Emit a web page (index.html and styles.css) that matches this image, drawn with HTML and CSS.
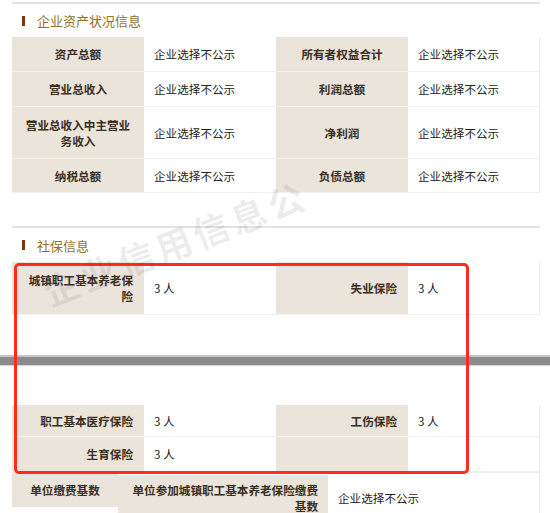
FILE: index.html
```html
<!DOCTYPE html>
<html lang="zh-CN">
<head>
<meta charset="utf-8">
<title>企业资产状况信息</title>
<link rel="stylesheet" href="styles.css">
</head>
<body>
<div class="page">
  <div class="rule rule-top"></div>
  <h2 class="title title-1"><span class="mark"></span>企业资产状况信息</h2>
  <div class="grid g1">
    <div class="lab">资产总额</div><div class="val">企业选择不公示</div><div class="lab">所有者权益合计</div><div class="val">企业选择不公示</div>
    <div class="lab">营业总收入</div><div class="val">企业选择不公示</div><div class="lab">利润总额</div><div class="val">企业选择不公示</div>
    <div class="lab">营业总收入中主营业务收入</div><div class="val">企业选择不公示</div><div class="lab">净利润</div><div class="val">企业选择不公示</div>
    <div class="lab">纳税总额</div><div class="val">企业选择不公示</div><div class="lab">负债总额</div><div class="val">企业选择不公示</div>
  </div>

  <div class="rule rule-2"></div>
  <h2 class="title title-2"><span class="mark"></span>社保信息</h2>
  <div class="grid g2 part-a">
    <div class="lab">城镇职工基本养老保险</div><div class="val">3 人</div><div class="lab">失业保险</div><div class="val">3 人</div>
  </div>
  <div class="cut"><div class="band"></div></div>
  <div class="grid g2 part-b">
    <div class="lab">职工基本医疗保险</div><div class="val">3 人</div><div class="lab">工伤保险</div><div class="val">3 人</div>
    <div class="lab">生育保险</div><div class="val">3 人</div><div class="lab"></div><div class="val"></div>
  </div>
  <div class="last">
    <div class="lab cell-a">单位缴费基数</div>
    <div class="lab cell-b">单位参加城镇职工基本养老保险缴费基数</div>
    <div class="val cell-c">企业选择不公示</div>
  </div>

  <div class="highlight"></div>
  <div class="wm wm-main">企业信用信息公</div>
</div>
</body>
</html>
```

FILE: styles.css
```css
* { box-sizing: border-box; }
html, body { margin: 0; padding: 0; background: #fff; }
body {
  font-family: "Noto Sans CJK SC", "Noto Sans", sans-serif;
  font-size: 11.6px;
  color: #222;
}
.page {
  position: relative;
  width: 550px;
  height: 513px;
  overflow: hidden;
}
.rule {
  margin-left: 12px;
  width: 528px;
  height: 2px;
  background: #e3e3e3;
}
.rule-top { margin-top: 2px; }
.rule-2 { margin-top: 33px; }

.title {
  margin: 0;
  display: flex;
  align-items: center;
  padding-left: 22px;
  font-size: 13px;
  font-weight: normal;
  color: #93712d;
}
.title-1 { height: 33px; }
.title-2 { height: 34px; }
.mark {
  display: inline-block;
  width: 3px;
  height: 10px;
  background: #7a3b12;
  margin-right: 12px;
}

.grid {
  display: grid;
  grid-template-columns: repeat(4, 132px);
  margin-left: 12px;
  width: 528px;
}
.g1 { grid-template-rows: 35px 35px 52px 34px; }
.part-a { grid-template-rows: 53px; }
.part-b { grid-template-rows: 32px 35px; }

.lab {
  background: #eae4da;
  color: #3a2e1f;
  font-weight: bold;
  display: flex;
  align-items: center;
  line-height: 16px;
  border-bottom: 1px solid #f4f1ec;
}
.val {
  background: #fff;
  color: #222;
  display: flex;
  align-items: center;
  padding-left: 10px;
  border-bottom: 1px solid #f0f0f0;
}
.grid .val:nth-child(4n) { border-right: 1px solid #ececec; }

.g1 .lab {
  justify-content: center;
  text-align: center;
  padding: 0 9px;
}
.g2 .lab {
  justify-content: flex-end;
  text-align: right;
  padding: 0 11px 0 10px;
}

.cut {
  height: 90px;
  padding-top: 40px;
}
.band {
  height: 11px;
  background: #8b8b8b;
  border-top: 2px solid #c6c6c6;
  border-bottom: 1px solid #d8d8d8;
}

.last {
  display: flex;
  align-items: flex-start;
  margin-left: 12px;
  width: 528px;
}
.cell-a {
  width: 106px;
  height: 35px;
  justify-content: center;
  border-bottom: none;
}
.cell-b {
  width: 210px;
  height: 46px;
  margin-top: 3px;
  justify-content: flex-end;
  text-align: right;
  padding: 0 10px 0 12px;
  border-bottom: none;
}
.cell-c {
  flex: 1;
  height: 50px;
  border-top: 1px solid #ececec;
  border-right: 1px solid #ececec;
  border-bottom: none;
}

.highlight {
  position: absolute;
  left: 14px;
  top: 263px;
  width: 455px;
  height: 211px;
  border: 3px solid #ff2b1c;
  border-radius: 5px;
  pointer-events: none;
}

.wm {
  position: absolute;
  white-space: nowrap;
  font-size: 36px;
  font-weight: bold;
  color: rgba(60, 60, 60, 0.09);
  transform-origin: 0 50%;
  transform: rotate(-21deg);
  pointer-events: none;
}
.wm-main {
  left: 44px;
  top: 266px;
  letter-spacing: 4px;
}
```
